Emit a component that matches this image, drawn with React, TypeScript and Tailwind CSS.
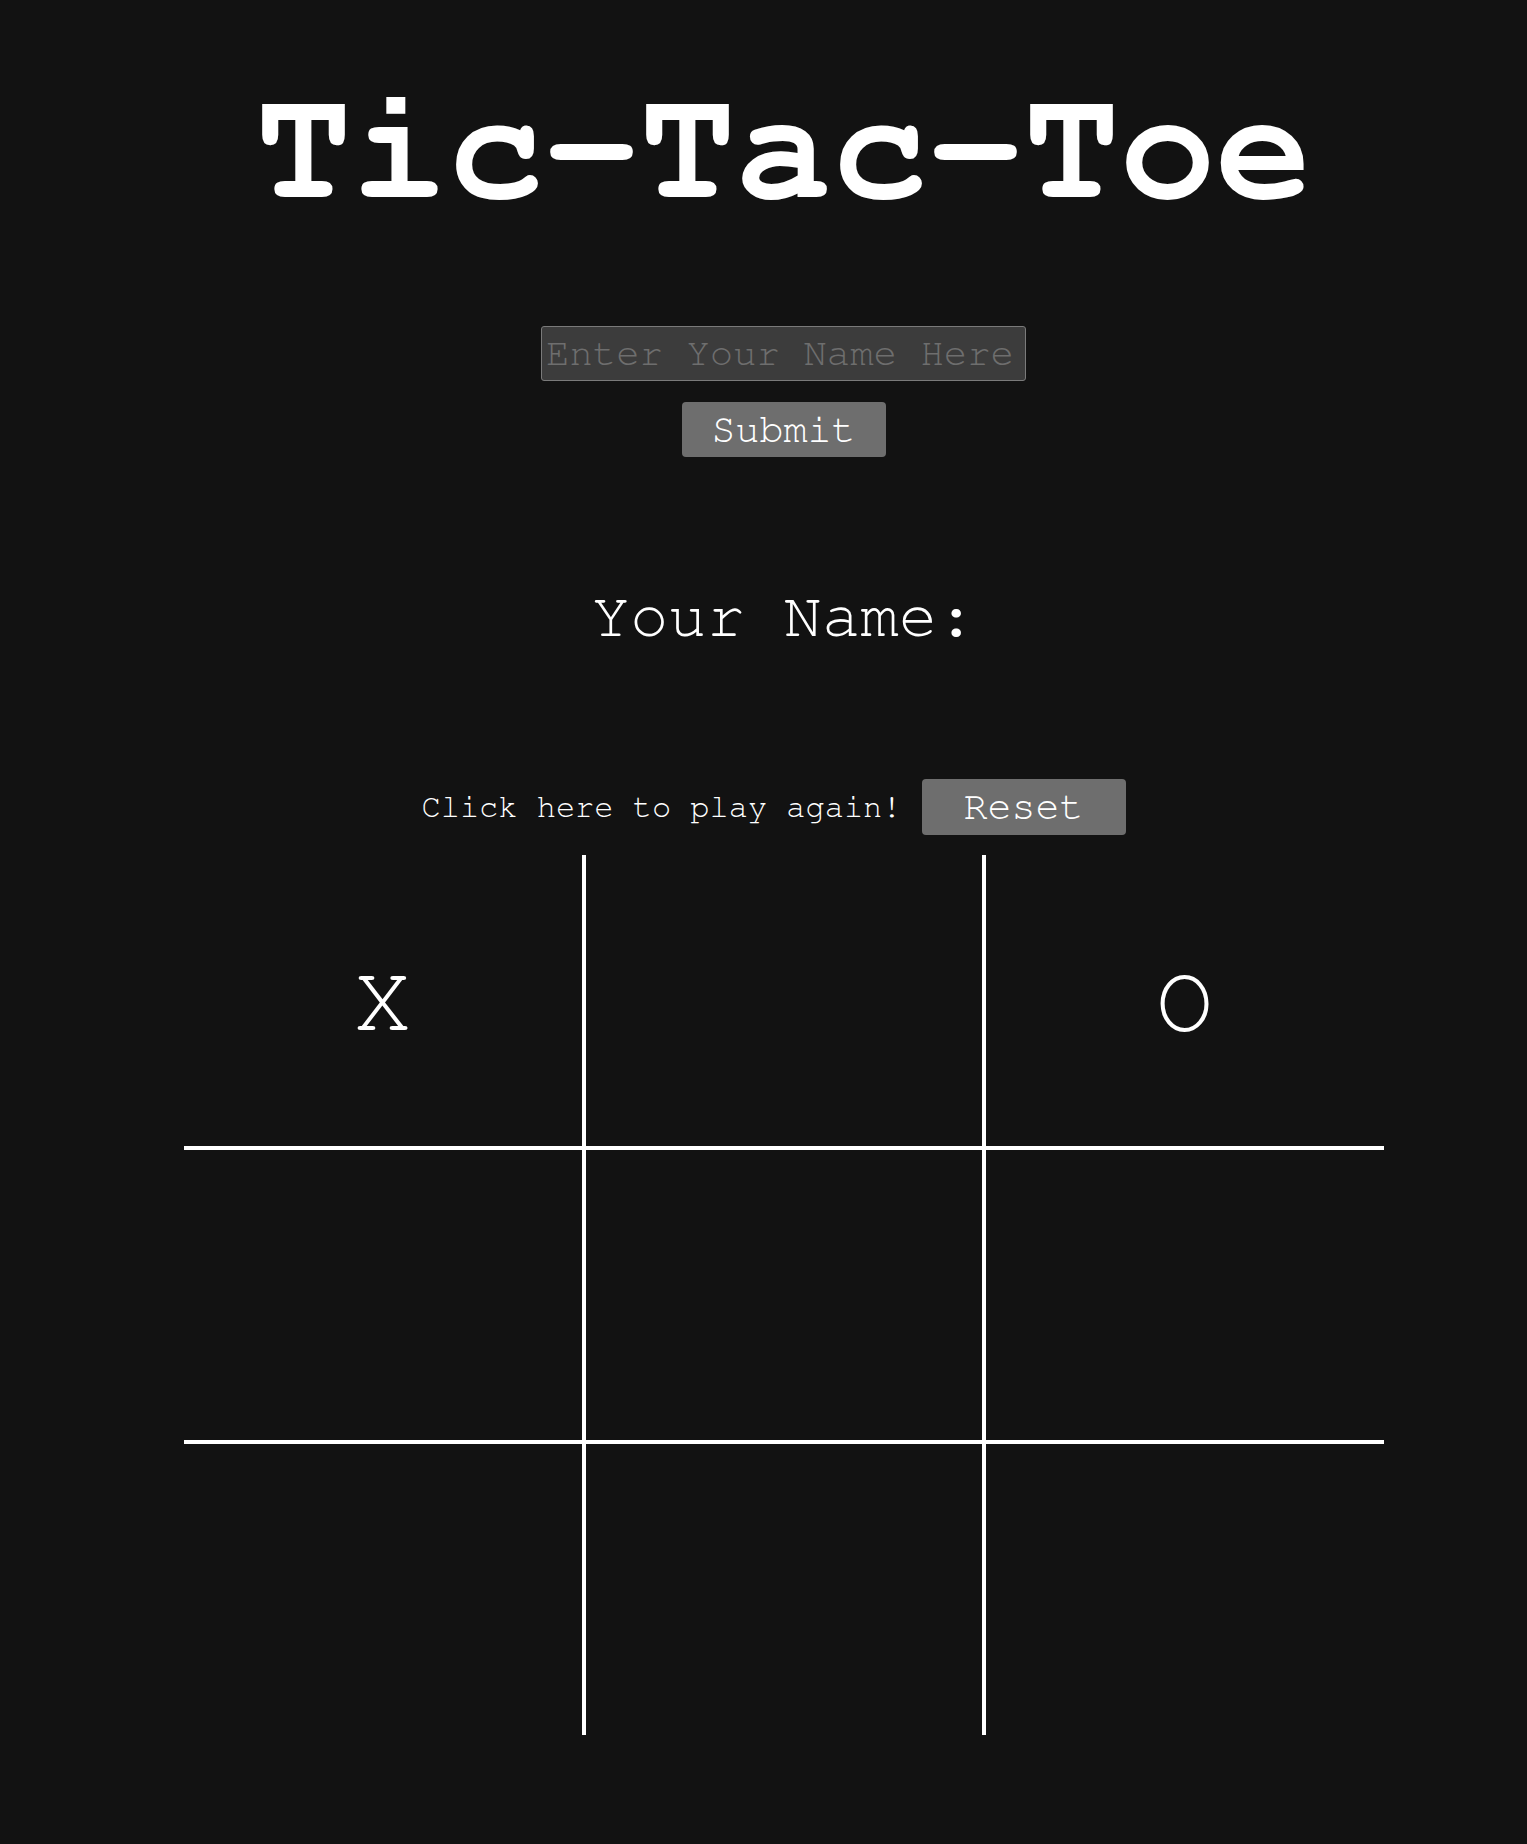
import React, { useState } from "react";

export default function App() {
  const [name, setName] = useState("");
  const board = ["X", "", "O", "", "", "", "", "", ""];
  const colCls = ["border-r-2", "border-x-2", "border-l-2"];
  const rowCls = ["border-b-2", "border-y-2", "border-t-2"];
  const font = "font-['Nimbus_Mono_PS','Nimbus_Mono_L','FreeMono','Courier_10_Pitch','Courier','Liberation_Mono',monospace]";
  return (
    <div className={`min-h-[1844px] w-full bg-[#121212] pl-10 text-white ${font}`}>
      <div className="flex flex-col items-center">
        <h1 className="mt-[69px] text-[160px] font-bold leading-[normal]">Tic-Tac-Toe</h1>
        <input
          value={name}
          onChange={(e) => setName(e.target.value)}
          placeholder="Enter Your Name Here"
          className={`mt-[97px] h-[55px] w-[485px] rounded-[3px] border border-[#7a7a7a] bg-[#3c3c3c] pl-[4px] pr-0 text-[39px] leading-[normal] text-white outline-none placeholder:text-[#6e6e6e] ${font}`}
        />
        <button className={`mt-[21px] h-[55px] w-[204px] rounded-[4px] bg-[#6e6e6e] text-[40px] leading-[normal] text-white ${font}`}>
          Submit
        </button>
        <h2 className="mt-[128px] text-[64px] font-normal leading-[normal]">Your Name:</h2>
        <div className="mt-[130px] flex items-center">
          <span className="text-[32px] leading-[normal]">Click here to play again!</span>
          <button className={`mx-[20px] h-[56px] w-[204px] rounded-[4px] bg-[#6e6e6e] text-[40px] leading-[normal] text-white ${font}`}>
            Reset
          </button>
        </div>
        <div className="mt-[20px] grid h-[880px] w-[1200px] grid-cols-3 grid-rows-3">
          {board.map((v, i) => (
            <div
              key={i}
              className={`flex items-center justify-center border-white text-[96px] leading-[normal] ${colCls[i % 3]} ${rowCls[Math.floor(i / 3)]}`}
            >
              {v}
            </div>
          ))}
        </div>
      </div>
    </div>
  );
}
